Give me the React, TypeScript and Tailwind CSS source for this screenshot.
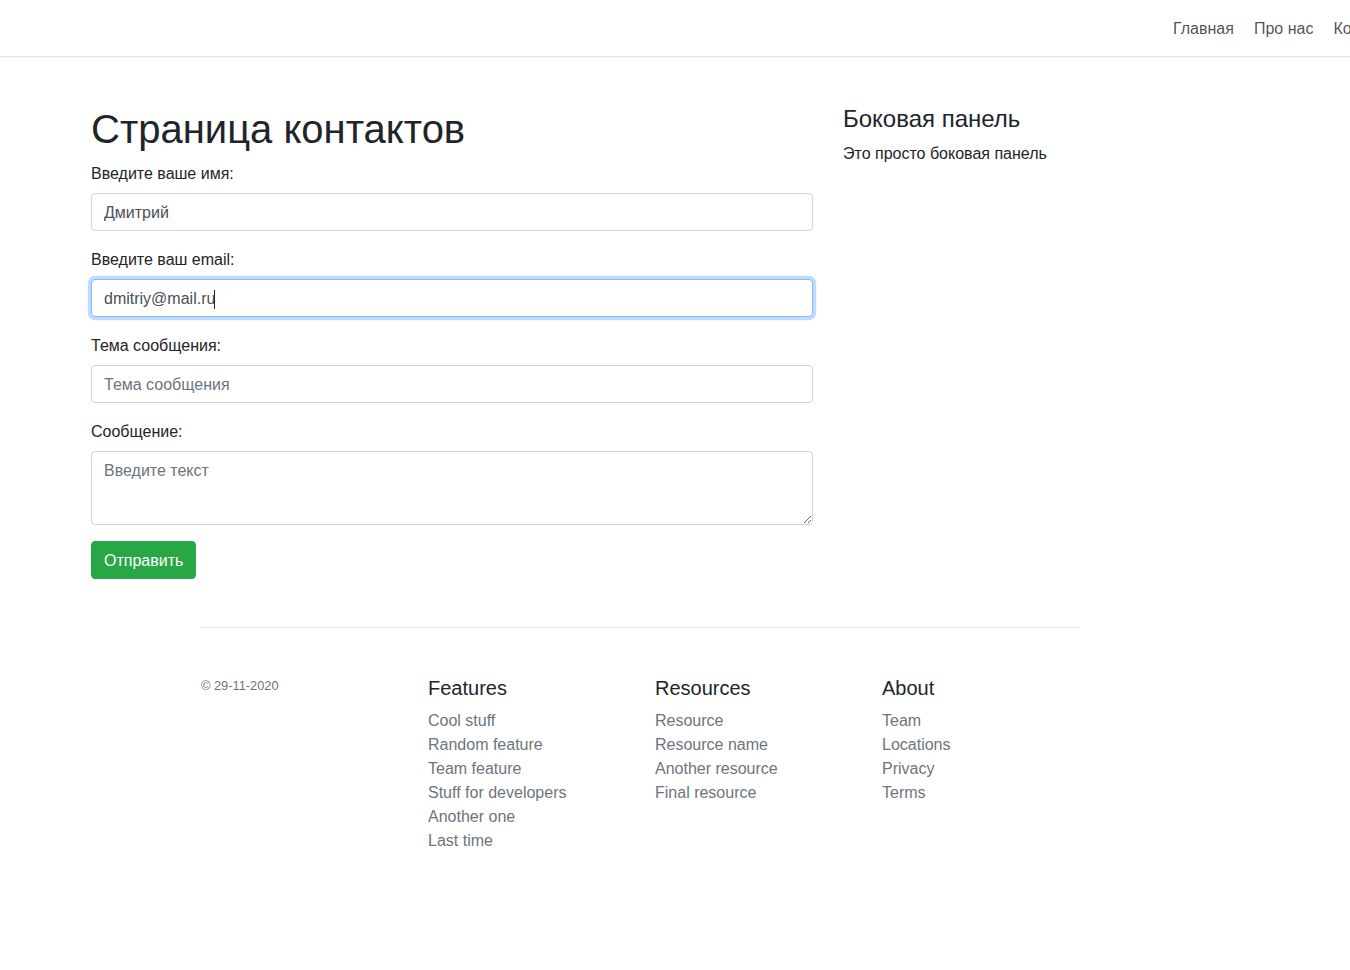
import React, { useEffect, useRef } from "react";

const font = { fontFamily: '"Liberation Sans", Arial, sans-serif' };

function FooterCol({ title, items }: { title: string; items: string[] }) {
  return (
    <div>
      <h5 className="text-[20px] leading-[24px] font-medium text-[#212529] mb-[9px]">{title}</h5>
      <ul>
        {items.map((i) => (
          <li key={i} className="text-[16px] leading-6">
            <a href="#" className="text-[#6c757d]">{i}</a>
          </li>
        ))}
      </ul>
    </div>
  );
}

export default function App() {
  const emailRef = useRef<HTMLInputElement>(null);
  useEffect(() => {
    const el = emailRef.current;
    if (el) {
      el.focus();
      const l = el.value.length;
      el.setSelectionRange(l, l);
    }
  }, []);

  const inputCls =
    "block w-full h-[38px] px-3 pt-[7px] pb-[5px] text-[16px] leading-6 text-[#495057] bg-white border border-[#ced4da] rounded-[4px] placeholder:text-[#6c757d] outline-none";
  const labelCls = "block pt-px mb-[7px] text-[16px] leading-6";

  return (
    <div className="min-h-[970px] bg-white text-[#212529] overflow-hidden" style={font}>
      <nav className="h-[57px] pt-[2px] border-b border-[#e5e5e5] shadow-[0_1px_2px_rgba(0,0,0,0.04)] flex items-center overflow-hidden">
        <ul className="flex ml-[1163px] whitespace-nowrap">
          {["Главная", "Про нас", "Контакты"].map((t) => (
            <li key={t}>
              <a href="#" className="block px-[10px] py-2 text-[16px] leading-6 text-[rgba(0,0,0,0.7)]">
                {t}
              </a>
            </li>
          ))}
        </ul>
      </nav>

      <main className="ml-[76px] w-[1128px] px-[15px] pt-[48px] flex gap-[30px]">
        <div className="w-[722px] shrink-0">
          <h1 className="text-[40px] leading-[48px] font-medium mb-2">Страница контактов</h1>
          <form onSubmit={(e) => e.preventDefault()}>
            <div className="mb-4">
              <label className={labelCls}>Введите ваше имя:</label>
              <input className={inputCls} defaultValue="Дмитрий" />
            </div>
            <div className="mb-4">
              <label className={labelCls}>Введите ваш email:</label>
              <div className="relative">
                <input
                  ref={emailRef}
                  className="block w-full h-[38px] px-3 pt-[7px] pb-[5px] text-[16px] leading-6 text-[#495057] bg-white border border-[#80bdff] rounded-[4px] outline-none shadow-[0_0_0_3.2px_rgba(0,123,255,0.25)] caret-transparent"
                  defaultValue="dmitriy@mail.ru"
                />
                <span className="absolute left-[123px] top-[11px] w-px h-[19px] bg-[#212529]" />
              </div>
            </div>
            <div className="mb-4">
              <label className={labelCls}>Тема сообщения:</label>
              <input className={inputCls} placeholder="Тема сообщения" />
            </div>
            <div className="mb-4">
              <label className={labelCls}>Сообщение:</label>
              <textarea
                className="block w-full h-[74px] px-3 pt-[7px] pb-[5px] text-[16px] leading-6 text-[#495057] bg-white border border-[#ced4da] rounded-[4px] placeholder:text-[#6c757d] outline-none resize-y"
                placeholder="Введите текст"
              />
            </div>
            <button
              type="submit"
              className="h-[38px] px-3 pt-px text-[16px] leading-6 text-white bg-[#28a745] border border-[#28a745] rounded-[4px]"
            >
              Отправить
            </button>
          </form>
        </div>
        <div className="flex-1">
          <h4 className="text-[24px] leading-[28px] font-medium mb-[9px]">Боковая панель</h4>
          <p className="text-[16px] leading-6">Это просто боковая панель</p>
        </div>
      </main>

      <footer className="ml-[201px] w-[879px] mt-[48px]">
        <hr className="border-0 border-t border-[rgba(0,0,0,0.1)] mb-[48px]" />
        <div className="grid grid-cols-[227px_227px_227px_227px]">
          <div>
            <small className="block text-[12.8px] leading-[19.2px] text-[#6c757d]">© 29-11-2020</small>
          </div>
          <FooterCol
            title="Features"
            items={["Cool stuff", "Random feature", "Team feature", "Stuff for developers", "Another one", "Last time"]}
          />
          <FooterCol title="Resources" items={["Resource", "Resource name", "Another resource", "Final resource"]} />
          <FooterCol title="About" items={["Team", "Locations", "Privacy", "Terms"]} />
        </div>
      </footer>
    </div>
  );
}
